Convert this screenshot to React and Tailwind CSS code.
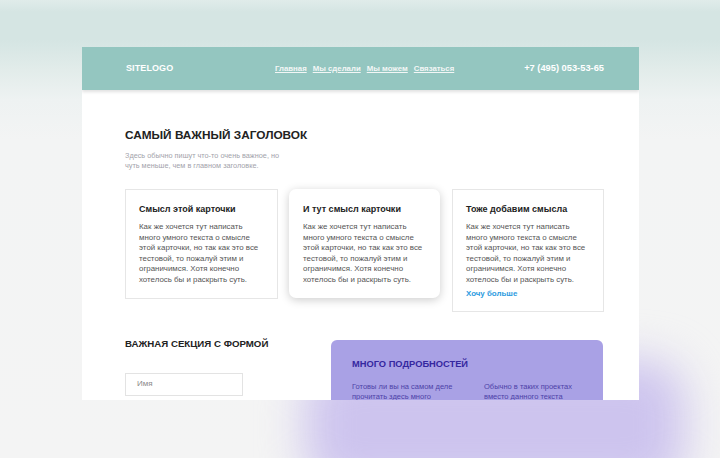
import React from "react";

const font = { fontFamily: '"Liberation Sans", Arial, sans-serif' };

const bodyLines = [
  "Как же хочется тут написать",
  "много умного текста о смысле",
  "этой карточки, но так как это все",
  "тестовой, то пожалуй этим и",
  "ограничимся. Хотя конечно",
  "хотелось бы и раскрыть суть.",
];

function Body() {
  return (
    <div className="mt-[7px] text-[7.9px] leading-[10.5px] text-[#555] whitespace-nowrap">
      {bodyLines.map((l) => (
        <div key={l}>{l}</div>
      ))}
    </div>
  );
}

export default function App() {
  return (
    <div
      className="w-[720px] h-[458px] overflow-hidden flex flex-col bg-[linear-gradient(180deg,#e0ecea_0px,#d5e5e3_12px,#d5e5e3_40px,#e2ecea_70px,#eef2f2_100px,#f3f4f4_140px,#f4f4f4_100%)] font-['Liberation_Sans',Arial,sans-serif]"
      style={font}
    >
      <div className="relative z-10 ml-[82px] mt-[47px] w-[557px] h-[353px] shrink-0 bg-white overflow-hidden flex flex-col">
        <header className="h-[43px] shrink-0 bg-[#94c6c0] flex items-center pl-[44px] pr-[35px] text-white shadow-[0_2px_3px_rgba(0,0,0,0.12)] relative z-10">
          <div className="w-[149px] text-[9px] font-bold tracking-[0.1px]">SITELOGO</div>
          <nav className="flex gap-[6px] text-[7.8px] font-bold text-[#f3f6f6] underline underline-offset-[1px]">
            <span>Главная</span>
            <span>Мы сделали</span>
            <span>Мы можем</span>
            <span>Связаться</span>
          </nav>
          <div className="ml-auto text-[9.3px] font-bold">+7 (495) 053-53-65</div>
        </header>

        <main className="pl-[43px] pr-[35px] flex flex-col">
          <h1 className="mt-[38px] text-[11.8px] leading-[15px] font-bold text-[#222]">
            САМЫЙ ВАЖНЫЙ ЗАГОЛОВОК
          </h1>
          <p className="mt-[8px] text-[7.3px] leading-[10px] text-[#a3a3ab]">
            Здесь обычно пишут что-то очень важное, но
            <br />
            чуть меньше, чем в главном заголовке.
          </p>

          <div className="mt-[18px] flex items-start">
            <div className="w-[153px] border border-[#e6e6e6] px-[13px] pt-[13px] pb-[13px]">
              <div className="text-[9px] leading-[12px] font-bold text-[#222]">Смысл этой карточки</div>
              <Body />
            </div>
            <div className="ml-[11px] w-[151px] rounded-[7px] bg-white shadow-[0_2px_10px_rgba(0,0,0,0.2)] px-[14px] pt-[14px] pb-[13px]">
              <div className="text-[9px] leading-[12px] font-bold text-[#222]">И тут смысл карточки</div>
              <Body />
            </div>
            <div className="ml-[12px] w-[152px] border border-[#e6e6e6] px-[13px] pt-[13px] pb-[11px]">
              <div className="text-[9px] leading-[12px] font-bold text-[#222]">Тоже добавим смысла</div>
              <Body />
              <div className="mt-[4px] text-[7.9px] leading-[10.5px] font-bold text-[#2d9be0]">Хочу больше</div>
            </div>
          </div>

          <div className="mt-[26px] flex items-start">
            <div className="w-[206px] flex flex-col">
              <h2 className="text-[9.7px] leading-[12px] font-bold text-[#222]">ВАЖНАЯ СЕКЦИЯ С ФОРМОЙ</h2>
              <div className="mt-[23px] w-[118px] h-[23px] border border-[#e3e3e3] flex items-center pl-[11px] text-[8px] text-[#8a8a8a]">
                Имя
              </div>
              <div className="mt-[4px] w-[118px] h-[23px] border border-[#e3e3e3]" />
            </div>
            <div className="mt-[2px] w-[272px] h-[80px] bg-[#a9a1e5] rounded-[6px] pl-[21px] pt-[18px]">
              <div className="text-[9.3px] leading-[12px] font-bold text-[#3527a0]">МНОГО ПОДРОБНОСТЕЙ</div>
              <div className="mt-[12px] flex text-[7.5px] leading-[10px] text-[#4d42a8] whitespace-nowrap">
                <div className="w-[132px]">
                  Готовы ли вы на самом деле
                  <br />
                  прочитать здесь много
                </div>
                <div>
                  Обычно в таких проектах
                  <br />
                  вместо данного текста
                </div>
              </div>
            </div>
          </div>
        </main>
      </div>

      <div className="relative z-0 -mt-[40px] ml-[305px] w-[380px] h-[130px] shrink-0 rounded-[40px] bg-[#cdc4ee] blur-[22px]" />
    </div>
  );
}
